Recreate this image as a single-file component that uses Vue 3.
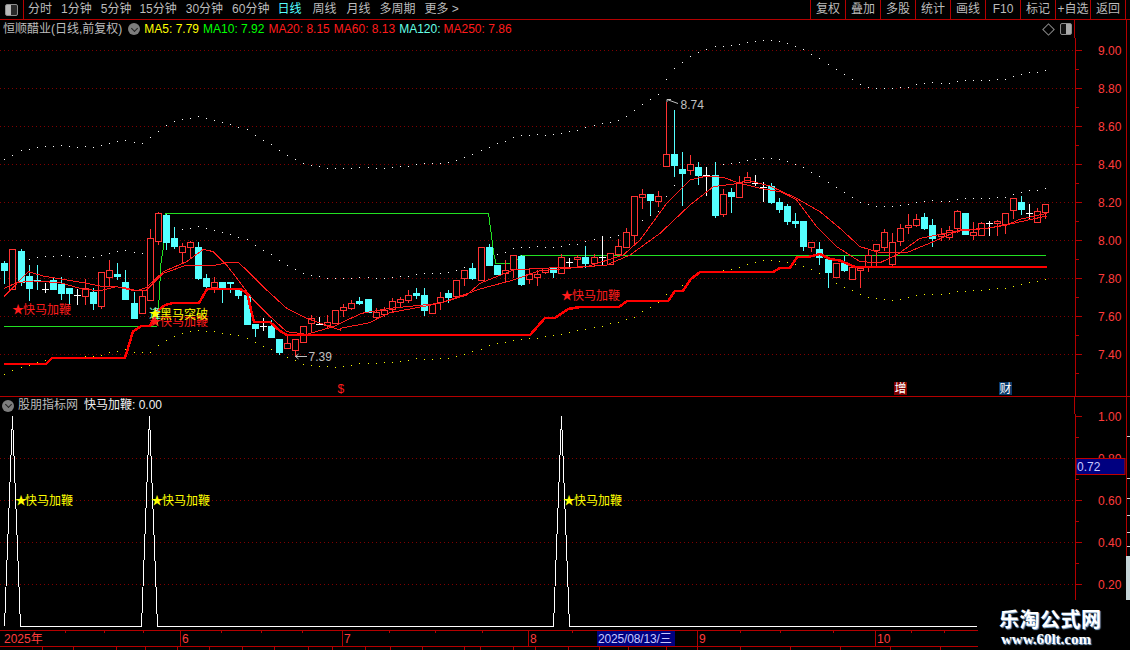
<script setup>
import { computed } from 'vue'

const periods = [
  { t: '分时' }, { t: '1分钟' }, { t: '5分钟' }, { t: '15分钟' }, { t: '30分钟' }, { t: '60分钟' },
  { t: '日线', active: true }, { t: '周线', wide: true }, { t: '月线', wide: true }, { t: '多周期' }, { t: '更多 >' }
]
const actions = ['复权', '叠加', '多股', '统计', '画线', 'F10', '标记', '+自选', '返回']
const maItems = [
  { t: 'MA5: 7.79', c: 'ma-yellow' }, { t: 'MA10: 7.92', c: 'ma-green' }, { t: 'MA20: 8.15', c: 'ma-red' },
  { t: 'MA60: 8.13', c: 'ma-red' }, { t: 'MA120:', c: 'ma-cyan' }, { t: 'MA250: 7.86', c: 'ma-red' }
]

const X = i => Math.round(4.4 + 8.07 * i)

// type, body top, body bottom, wick top, wick bottom
const raw = [
  ['c',263,270,261,284],['r',249,289,249,289],['c',251,282,249,286],['c',276,288,265,301],['c',280,281,265,290],
  ['w',289,289,283,293],['c',280,289,277,289],['c',284,293,277,300],['c',288,293,288,305],['w',295,295,289,305],
  ['r',288,296,279,305],['c',292,303,288,310],['r',272,306,272,309],['r',270,277,260,287],['c',274,276,263,280],
  ['c',282,299,270,299],['c',303,318,292,318],['r',296,313,291,313],['r',238,300,229,300],['r',213,241,212,245],
  ['c',215,242,214,250],['c',238,246,227,249],['r',246,252,243,263],['r',242,247,241,259],['c',247,278,242,280],
  ['c',278,286,274,290],['r',282,287,277,293],['c',282,288,282,303],['c',282,283,282,293],['c',289,295,289,299],
  ['c',295,324,295,324],['c',324,328,324,337],['w',326,326,318,331],['c',326,337,320,337],['c',339,352,339,355],
  ['r',343,348,336,348],['r',339,350,339,357],['r',326,342,326,342],['r',318,323,315,333],['w',324,324,317,325],
  ['r',322,325,315,328],['r',310,323,310,323],
  ['r',307,310,304,317],['r',303,308,300,310],['c',301,303,297,305],['c',299,312,299,312],['r',312,317,308,320],
  ['r',310,314,307,317],['r',301,309,298,312],['r',299,302,297,307],['r',295,300,290,303],['c',293,295,288,299],
  ['c',295,310,288,316],['r',304,313,304,313],['r',297,302,292,310],['c',293,297,290,303],['r',280,296,280,296],
  ['r',270,278,270,286],['c',268,278,263,280],['r',247,280,247,280],['c',247,265,244,265],['c',265,274,265,274],
  ['r',270,273,260,283],['r',255,269,255,278],['c',256,284,255,286],['r',274,279,269,284],['r',274,277,270,286],
  ['r',268,272,268,274],['c',268,272,268,278],['r',257,273,254,273],['w',262,262,258,267],['r',257,259,255,267],
  ['c',257,263,246,268],['r',257,263,254,267],['w',257,257,236,265],['r',253,264,253,265],['r',246,254,239,254],
  ['r',232,247,228,247],['r',196,235,196,244],['r',194,197,189,209],['c',194,200,194,215],['r',196,201,191,207],
  ['r',154,166,102,166],['c',154,165,110,177],['c',169,173,152,206],['r',164,170,155,175],['c',167,175,162,185],
  ['w',175,175,167,196],['c',175,215,162,218],['r',194,214,189,217],['c',192,196,188,213],['r',182,197,176,198],
  ['r',177,182,172,182],['w',183,183,175,186],['w',187,187,182,202],['c',186,202,183,204],['c',202,209,198,213],
  ['c',206,221,204,225],['c',221,223,213,228],['c',221,246,221,251],['r',242,247,242,252],['c',249,257,242,265],
  ['c',259,272,259,288],['r',263,277,263,277],['c',263,270,256,272],['r',267,279,267,279],['r',268,270,268,288],
  ['r',255,266,249,272],['r',244,250,244,266],['r',232,247,229,251],['r',242,264,233,266],['r',228,241,224,246],
  ['r',225,227,214,234],['r',219,225,214,227],['c',217,228,213,230],['c',225,238,219,247],['r',234,236,228,241],
  ['r',230,237,226,240],['r',211,228,210,233],['c',213,234,213,234],['r',232,235,222,240],['r',223,235,222,235],
  ['w',223,223,221,236],['r',221,223,220,236],['r',213,224,213,234],['r',198,210,198,219],['c',202,209,196,215],
  ['w',213,213,204,219],['r',211,222,208,222],['r',204,212,204,219]
]

const candles = computed(() => raw.map(([t, bt, bb, wt, wb], i) => ({ t, bt, bb, wt, wb, x: X(i) + 0.5 })))

const upperA = [208,196,181,178,172,169,169,166,169,172,169,172,166,160,154,151,157,160,142,124,106,94,88,85,79,85,91,97,103,112,118,136,151,163,181,196,208,220,226,229,235,235,235,235,232,232,235,235,232,229,229,223,220,220,220,217,211,202,193,181,172,160,154,142,136,136,133,136,133,130,124,121,112,106,100,97,91,79,61,43,28,13]
const upperB = [148,115,97,79,67,58,49,49,46,43,37,34,31,31,34,40,49,58,73,85,103,118,133,148,163,170,175,175,175,172,170,163,160,157,160,160,154,151,151,151,151,148,148,139,133,127,127,121]
const upper = [...upperA.map(v => 90 + v / 3), ...upperB.map(v => 30 + v / 3)]
const mid = upper.map((y, i) => y + (i < 60 ? 110 : i > 85 ? 117.5 : 110 + (i - 60) * 0.3))
const lowerA = [223,211,202,196,187,181,175,172,170,170,167,167,165,157,152,148,155,155,155,136,120,109,100,94,91,94,94,100,103,106,115,127,139,148,160,172,181,193,196,199,199,202,199,196,190,190,190,187,187,184,181,175,178,178,175,175,169,163,154,148,136,130,127,121,118,115,115,109,106,103,97,91,88,82]
const lowerC = [361,358,352,343,337,331,331,334,337,343,349,358,370,385,400,412,421,433,442,445,448,451,448,442,436,433,433,433,430,424,424,421,421,418,415,415,409,403,397,394,388]
const lower = [
  ...lowerA.map(v => 300 + v / 3),
  326,323,322,319,317,311,307,302,294,290,285,280,273,272,271,
  ...lowerC.map(v => 150 + v / 3)
]
const dots = computed(() => ({
  white: [...upper, ...mid.slice(3)].map((y, n) => ({
    x: X(n < upper.length ? n : n - upper.length + 3), y: Math.round(y)
  })),
  yellow: lower.map((y, i) => ({ x: X(i), y: Math.round(y) }))
}))

const z = (ox, oy, pts) => pts.map(([a, b]) => [ox + a / 3, oy + b / 3])
const toPts = pts => pts.map(p => p.join(',')).join(' ')

const fast = toPts([
  ...z(0, 200, [[12,290],[85,215],[130,228],[200,240],[260,250],[300,258],[370,262],[410,272],[440,262],[490,215],[560,185],[610,148],[640,155],[680,195],[760,300],[800,340],[860,395],[920,403],[1000,380]]),
  ...z(340, 90, [[0,700],[65,670],[150,655],[300,640],[380,615],[420,580],[520,540],[600,535],[740,530],[850,495],[900,450],[980,340],[1050,270],[1100,258],[1150,262],[1198,280]]),
  ...z(720, 150, [[60,100],[120,115],[180,125],[230,150],[290,230],[350,290],[420,335],[480,338],[530,315],[600,265],[700,245],[800,235],[860,225],[900,208],[980,190]])
])
const slow = toPts([
  ...z(0, 200, [[12,265],[50,248],[100,243],[180,248],[250,268],[300,272],[350,260],[400,272],[440,270],[490,220],[560,195],[590,195],[640,197],[680,188],[715,187],[750,220],[800,270],[860,325],[920,355],[1020,390]]),
  ...z(340, 90, [[0,715],[90,698],[150,668],[300,640],[420,597],[520,570],[600,542],[800,525],[870,495],[960,430],[1050,345],[1120,290],[1198,280]]),
  ...z(720, 150, [[80,90],[150,108],[230,145],[300,185],[360,235],[420,290],[480,308],[560,308],[640,275],[720,240],[800,235],[880,220],[980,198]])
])
const support = '4,364 46,364 52,358 125,358 133,331.5 141,326 150,326 157,311 165,305 173,303 199,303 207,289 240,289 247,293 254,322 270,322 280,331 287,335 530,335 545,318 555,318 568,309 580,307 619,307 627,301 668,301 675,291 683,291 691,279 700,272 773,272 780,268 790,268 797,257 808,257 820,254 830,259 840,260.5 855,267 1047,267'
const greenLine = '4,326.5 157,326.5 159,300 161,263 163,250 165,225 165,213.5 488,213.5 489,217 492,240 494,255 496,263.5 514,263.5 521,255.5 1046,255.5'

const mainGrid = [
  { y: 50, t: '9.00' }, { y: 88, t: '8.80' }, { y: 126, t: '8.60' }, { y: 164, t: '8.40' },
  { y: 202, t: '8.20' }, { y: 240, t: '8.00' }, { y: 278, t: '7.80' }, { y: 316, t: '7.60' }, { y: 354, t: '7.40' }
]
const mainMinor = [69, 107, 145, 183, 221, 259, 297, 335, 373]
const subGrid = [
  { y: 416, t: '1.00', noLine: true }, { y: 458, t: '0.80' }, { y: 500, t: '0.60' }, { y: 542, t: '0.40' }, { y: 584, t: '0.20' }
]
const subMinor = [437, 479, 521, 563]
const sideTicks = [436, 478, 498, 515, 532, 546]
const spikes = '4.5,626.5 12.5,416.5 20.5,626.5 141.5,626.5 149.5,416.5 157.5,626.5 553.5,626.5 561.5,416.5 569.5,626.5 977,626.5'
const spikeLabels = [{ s: 21, x: 25 }, { s: 157, x: 162 }, { s: 569, x: 574 }]

const months = [{ x: 180, t: '6' }, { x: 342, t: '7' }, { x: 528, t: '8' }, { x: 697, t: '9' }, { x: 875, t: '10' }]
const axisTicks = [65, 104, 143, 221, 261, 302, 389, 435, 482, 572, 740, 780, 833, 911, 944]
const stubs = [42, 73, 116, 145, 177, 209, 242, 274, 308, 332, 365, 390, 422, 464, 480, 513, 535, 568, 599, 628, 666, 697, 740, 790, 840, 890, 940]
</script>

<template>
  <div class="terminal">
    <header class="toolbar">
      <div class="layout-btn"><span class="layout-icon"></span></div>
      <nav class="periods">
        <span v-for="p in periods" :key="p.t" class="period" :class="{ active: p.active, wide: p.wide }">{{ p.t }}</span>
      </nav>
      <div class="actions">
        <span v-for="a in actions" :key="a" class="action">{{ a }}</span>
      </div>
    </header>

    <section class="pane pane-main">
      <div class="pane-head">
        <div class="head-left">
          <span class="title">恒顺醋业(日线,前复权)</span>
          <span class="chev"></span>
          <span v-for="m in maItems" :key="m.t" class="ma" :class="m.c">{{ m.t }}</span>
          <span class="head-tools">
            <span class="diamond"></span>
            <span class="split-icon"></span>
          </span>
        </div>
        <div class="head-right"></div>
      </div>
      <svg class="plot plot-main" viewBox="0 38 1130 358" width="1130" height="358">
        <g shape-rendering="crispEdges">
          <line v-for="g in mainGrid" :key="g.y" class="grid" x1="0" x2="1075" :y1="g.y + 0.5" :y2="g.y + 0.5" />
          <rect v-for="(d, k) in dots.white" :key="'w' + k" class="dot-w" :x="d.x" :y="d.y" width="1" height="1" />
          <rect v-for="(d, k) in dots.yellow" :key="'y' + k" class="dot-y" :x="d.x" :y="d.y" width="1" height="1" />
          <polyline class="green" :points="greenLine" />
          <g v-for="(c, k) in candles" :key="k">
            <template v-if="c.t === 'r'">
              <line class="up" :x1="c.x" :x2="c.x" :y1="c.wt" :y2="c.bt" />
              <line class="up" :x1="c.x" :x2="c.x" :y1="c.bb" :y2="c.wb" />
              <rect class="up-body" :x="c.x - 3" :y="c.bt + 0.5" width="6" :height="c.bb - c.bt" />
            </template>
            <template v-else-if="c.t === 'c'">
              <line class="down" :x1="c.x" :x2="c.x" :y1="c.wt" :y2="c.wb" />
              <rect class="down-body" :x="c.x - 3.5" :y="c.bt" width="7" :height="c.bb - c.bt + 1" />
            </template>
            <template v-else>
              <line class="doji" :x1="c.x" :x2="c.x" :y1="c.wt" :y2="c.wb" />
              <line class="doji" :x1="c.x - 3.5" :x2="c.x + 3.5" :y1="c.bt + 0.5" :y2="c.bt + 0.5" />
            </template>
          </g>
          <polyline class="ma-line" :points="slow" />
          <polyline class="ma-line" :points="fast" />
          <polyline class="support" :points="support" />

          <line class="axis" x1="1075.5" x2="1075.5" y1="38" y2="396" />
          <line class="axis" x1="1126.5" x2="1126.5" y1="38" y2="396" />
          <template v-for="g in mainGrid" :key="'t' + g.y">
            <line class="axis" x1="1075" x2="1082" :y1="g.y + 0.5" :y2="g.y + 0.5" />
          </template>
          <line v-for="y in mainMinor" :key="y" class="axis" x1="1075" x2="1079" :y1="y + 0.5" :y2="y + 0.5" />
          <rect class="badge-zeng" x="894" y="382" width="13" height="13" />
          <rect class="badge-cai" x="999" y="382" width="13" height="13" />
        </g>
        <text v-for="g in mainGrid" :key="'l' + g.y" class="price" x="1098" :y="g.y + 4.8">{{ g.t }}</text>

        <text class="sig sig-red" x="12" y="313.5">★</text>
        <text class="sig sig-red" x="23" y="313.5">快马加鞭</text>
        <text class="sig sig-red" x="561" y="299.5">★</text>
        <text class="sig sig-red" x="572" y="299.5">快马加鞭</text>
        <text class="sig sig-cyan" x="149" y="318">逢</text>
        <text class="sig sig-red" x="149" y="325.5">★</text>
        <text class="sig sig-red" x="160" y="326">快马加鞭</text>
        <text class="sig sig-yellow" x="149" y="318">★</text>
        <text class="sig sig-yellow" x="160" y="318.5">黑马突破</text>

        <path class="arrow" d="M307 356.5H295.5M298.5 354L295.5 356.5L298.5 359" />
        <text class="extreme" x="308.5" y="360.5">7.39</text>
        <path class="arrow" d="M667 99.5L678 103.5M667 99.5H671M667 99.5V102" />
        <text class="extreme" x="680.5" y="109">8.74</text>

        <text class="sig sig-red" x="337.5" y="393">$</text>
        <text class="badge-text" x="894.5" y="393">增</text>
        <text class="badge-text" x="999.5" y="393">财</text>
      </svg>
    </section>

    <section class="pane pane-sub">
      <div class="pane-head sub-head">
        <div class="head-left">
          <span class="chev"></span>
          <span class="title">股朋指标网</span>
          <span class="indicator">快马加鞭: 0.00</span>
        </div>
        <div class="head-right"></div>
      </div>
      <svg class="plot plot-sub" viewBox="0 414 1130 216" width="1130" height="216">
        <g shape-rendering="crispEdges">
          <template v-for="g in subGrid" :key="g.y">
            <line v-if="!g.noLine" class="grid" x1="0" x2="1075" :y1="g.y + 0.5" :y2="g.y + 0.5" />
            <line class="axis" x1="1075" x2="1082" :y1="g.y + 0.5" :y2="g.y + 0.5" />
          </template>
          <line v-for="y in subMinor" :key="y" class="axis" x1="1075" x2="1079" :y1="y + 0.5" :y2="y + 0.5" />
          <polyline class="spike" :points="spikes" />
          <line class="axis" x1="1075.5" x2="1075.5" y1="414" y2="600" />
          <line class="axis" x1="1126.5" x2="1126.5" y1="414" y2="600" />
          <line v-for="y in sideTicks" :key="y" class="side-tick" x1="1127" x2="1130" :y1="y + 0.5" :y2="y + 0.5" />
          <rect class="side-block" x="1126" y="556" width="4" height="44" />
        </g>
        <text v-for="g in subGrid" :key="g.t" class="price" x="1098" :y="g.y + 4.8">{{ g.t }}</text>
        <g v-for="s in spikeLabels" :key="s.x">
          <text class="sig sig-yellow" :x="s.s - 6" y="504.5">★</text>
          <text class="sig sig-yellow" :x="s.x" y="504.5">快马加鞭</text>
        </g>
        <rect class="value-box" x="1076" y="458.5" width="49" height="16" />
        <text class="value-text" x="1077" y="471">0.72</text>
      </svg>
    </section>

    <footer class="time-axis">
      <svg viewBox="0 630 1130 20" width="1130" height="20">
        <g shape-rendering="crispEdges">
          <line class="axis" x1="0" x2="978" y1="630.5" y2="630.5" />
          <line class="axis" x1="0" x2="978" y1="646.5" y2="646.5" />
          <line v-for="x in axisTicks" :key="x" class="axis" :x1="x + 0.5" :x2="x + 0.5" y1="630" y2="633" />
          <line v-for="m in months" :key="m.x" class="axis" :x1="m.x + 0.5" :x2="m.x + 0.5" y1="630" y2="646" />
          <line v-for="x in stubs" :key="x" class="axis" :x1="x + 0.5" :x2="x + 0.5" y1="646" y2="650" />
          <rect class="date-box" x="597" y="631" width="78" height="15" />
        </g>
        <text class="time" x="4" y="643">2025年</text>
        <text v-for="m in months" :key="'m' + m.x" class="time" :x="m.x + 2" y="643">{{ m.t }}</text>
        <text class="date-text" x="598" y="642.5">2025/08/13/三</text>
      </svg>
    </footer>

    <div class="watermark">
      <div class="wm-name">乐淘公式网</div>
      <div class="wm-url">www.60lt.com</div>
    </div>
  </div>
</template>

<style>
html, body { margin: 0; padding: 0; background: #000; }
</style>

<style scoped>
.terminal {
  position: relative;
  width: 1130px;
  height: 650px;
  background: #000;
  overflow: hidden;
  display: flex;
  flex-direction: column;
  font-family: "Liberation Sans", "Noto Sans CJK SC", sans-serif;
  font-size: 12px;
  color: #bcbcbc;
}
.toolbar {
  display: flex;
  flex: none;
  height: 19px;
  border-bottom: 1px solid #b40000;
  line-height: 19px;
}
.layout-btn {
  width: 23px;
  flex: none;
  border-right: 1px solid #b40000;
  display: flex;
  align-items: center;
  justify-content: center;
}
.layout-icon {
  display: block;
  width: 11px;
  height: 10px;
  border: 1px solid #8c8c8c;
  border-radius: 2px;
  background: linear-gradient(to right, #b8b8b8 50%, #2a2a2a 50%);
}
.periods {
  display: flex;
  gap: 9px;
  padding-left: 4px;
  flex: 1;
}
.period { white-space: nowrap; }
.period:nth-child(n + 4) { position: relative; left: -1px; }
.period.active { color: #55ffff; left: -2px; }
.period.wide { margin-left: 1px; }
.actions {
  display: flex;
  width: 320px;
  flex: none;
  box-sizing: border-box;
  padding-right: 4px;
}
.action {
  flex: 1;
  min-width: 0;
  text-align: center;
  white-space: nowrap;
  border-left: 1px solid #b40000;
}
.action:last-child { border-right: 1px solid #b40000; }
.pane { display: flex; flex-direction: column; flex: none; }
.pane-main { height: 376px; border-bottom: 1px solid #b40000; box-sizing: content-box; }
.pane-head { display: flex; height: 18px; flex: none; line-height: 18px; }
.head-left {
  width: 1075px;
  flex: none;
  display: flex;
  align-items: center;
  box-sizing: border-box;
  padding-left: 3px;
  border-right: 1px solid #b40000;
}
.head-right { width: 51px; flex: none; border-right: 1px solid #b40000; }
.title { white-space: nowrap; }
.chev {
  position: relative;
  flex: none;
  width: 12px;
  height: 12px;
  margin: 0 4px 0 6px;
  border-radius: 50%;
  background: #7d7d7d;
}
.chev::after {
  content: "";
  position: absolute;
  left: 3.5px;
  top: 2.5px;
  width: 4px;
  height: 4px;
  border-right: 1px solid #222;
  border-bottom: 1px solid #222;
  transform: rotate(45deg);
}
.ma { margin-right: 4px; white-space: nowrap; }
.ma-yellow { color: #ffff00; }
.ma-green { color: #00ff00; }
.ma-red { color: #ff1c1c; }
.ma-cyan { color: #66ffe6; margin-right: 3px; }
.head-tools {
  margin-left: auto;
  display: flex;
  align-items: center;
  gap: 7px;
  padding-right: 2px;
}
.diamond {
  width: 7px;
  height: 7px;
  border: 1px solid #8a8a8a;
  transform: rotate(45deg);
}
.split-icon {
  width: 10px;
  height: 10px;
  border: 1px solid #8c8c8c;
  border-radius: 2px;
  background: linear-gradient(to right, #111 50%, #aaa 50%);
}
.sub-head .chev { margin: 0 4px 0 -1px; }
.indicator { margin-left: 6px; color: #f0f0f0; white-space: nowrap; }
.plot { display: block; flex: none; overflow: visible; }
.pane-sub { height: 233px; }
.sub-head { height: 17px; line-height: 17px; }
.time-axis { flex: none; height: 20px; }
.time-axis svg { display: block; }

.grid { stroke: #800000; stroke-width: 1; stroke-dasharray: 1 3; }
.axis { stroke: #b40000; stroke-width: 1; }
.dot-w { fill: #fff; }
.dot-y { fill: #ffff00; }
.green { fill: none; stroke: #22e022; stroke-width: 1; }
.up { stroke: #ff3232; stroke-width: 1; }
.up-body { fill: #000; stroke: #ff3232; stroke-width: 1; }
.down { stroke: #54ffff; stroke-width: 1; }
.down-body { fill: #54ffff; }
.doji { stroke: #fff; stroke-width: 1; }
.ma-line { fill: none; stroke: #ff1c1c; stroke-width: 1; }
.support { fill: none; stroke: #ff0000; stroke-width: 2.5; }
.spike { fill: none; stroke: #fff; stroke-width: 1; }
.side-tick { stroke: #d0d0d0; stroke-width: 1; }
.side-block { fill: #c6d6da; }
.badge-zeng { fill: #800000; }
.badge-cai { fill: #0a3a6a; }
.date-box { fill: #000080; }
.value-box { fill: #000080; stroke: #c00000; stroke-width: 1; }

.price { fill: #ff3c3c; font-size: 12px; }
.sig { font-size: 12px; }
.sig-red { fill: #ff1c1c; }
.sig-yellow { fill: #ffff00; }
.sig-cyan { fill: #7fffd8; }
.extreme { fill: #c0c0c0; font-size: 12px; }
.arrow { fill: none; stroke: #c0c0c0; stroke-width: 1; }
.badge-text { fill: #fff; font-size: 12px; }
.value-text { fill: #c8c8ff; font-size: 12px; }
.time { fill: #ff3c3c; font-size: 12px; }
.date-text { fill: #c8c8ff; font-size: 12px; letter-spacing: -0.15px; }

.watermark {
  position: absolute;
  right: 0;
  bottom: 0;
  width: 152px;
  height: 50px;
  background: #000;
  box-sizing: border-box;
  padding: 6px 0 0 21px;
  color: #fff;
}
.wm-name {
  font-family: "Noto Sans CJK SC", sans-serif;
  font-size: 20px;
  font-weight: 700;
  line-height: 26px;
  letter-spacing: 0.5px;
  text-shadow: 1px 1px 1px #8fb4d8;
}
.wm-url {
  font-family: "Liberation Serif", serif;
  font-size: 15px;
  font-weight: 700;
  line-height: 15px;
  padding-left: 2px;
  text-shadow: 1px 1px 1px #8fb4d8;
}
</style>
